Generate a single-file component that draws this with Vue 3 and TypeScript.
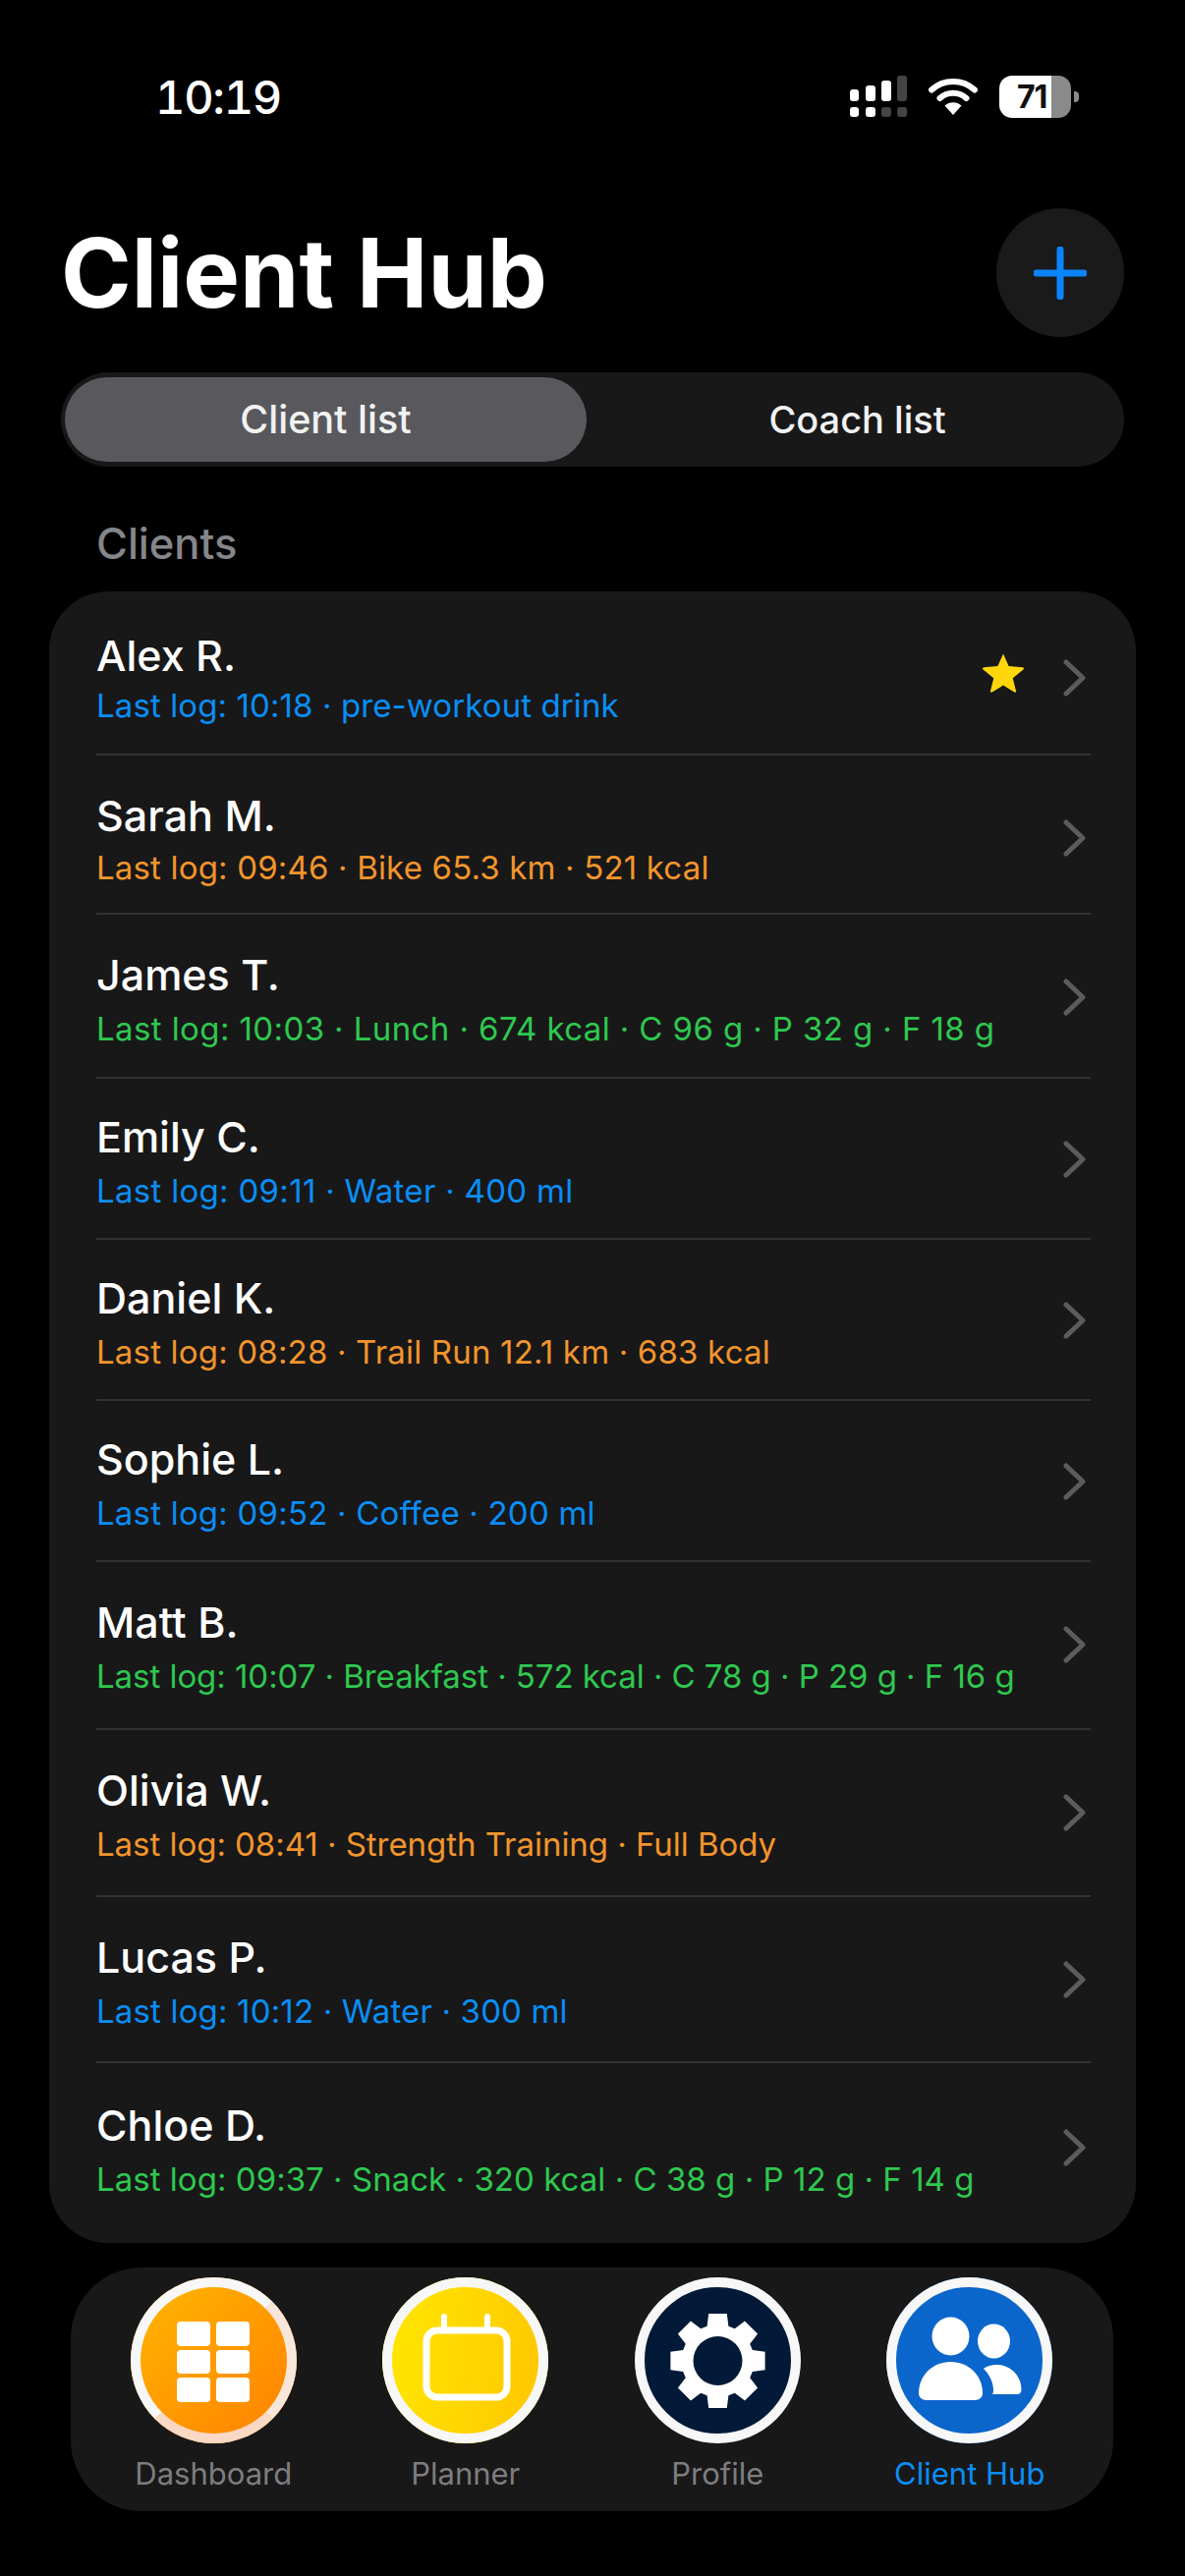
<template>
  <div class="screen">
    <header class="status">
      <span class="status__time">10:19</span>
      <div class="status__icons">
        <svg class="signal" width="58" height="42" viewBox="0 0 58 42">
          <rect x="0" y="14" width="9" height="12" rx="3" fill="#fff" />
          <rect x="16" y="10" width="10" height="16" rx="3" fill="#fff" />
          <rect x="32" y="5" width="10" height="21" rx="3" fill="#fff" />
          <rect x="48" y="0" width="10" height="26" rx="3" fill="#444" />
          <rect x="0" y="32" width="9" height="10" rx="3" fill="#fff" />
          <rect x="16" y="32" width="10" height="10" rx="3" fill="#fff" />
          <rect x="32" y="32" width="10" height="10" rx="3" fill="#444" />
          <rect x="48" y="32" width="10" height="10" rx="3" fill="#444" />
        </svg>
        <svg class="wifi" width="50" height="40" viewBox="0 0 50 40" fill="none">
          <path d="M3 13.5C15 2 35 2 47 13.5" stroke="#fff" stroke-width="6" stroke-linecap="round" />
          <path d="M11.5 22C19 15 31 15 38.5 22" stroke="#fff" stroke-width="6" stroke-linecap="round" />
          <path d="M16.5 29.5C21 25 29 25 33.5 29.5L25 39Z" fill="#fff" />
        </svg>
        <div class="battery">
          <div class="battery__body">
            <span class="battery__level">71</span>
          </div>
          <span class="battery__nub" />
        </div>
      </div>
    </header>

    <div class="title-row">
      <h1 class="title">Client Hub</h1>
      <button class="add-btn">
        <svg width="54" height="54" viewBox="0 0 54 54" fill="none">
          <path d="M27 3V51M3 27H51" stroke="#0a84ff" stroke-width="7" stroke-linecap="round" />
        </svg>
      </button>
    </div>

    <div class="segment">
      <div class="segment__item segment__item--active">Client list</div>
      <div class="segment__item segment__item--coach">Coach list</div>
    </div>

    <div class="section-label">Clients</div>

    <section class="card">
      <div
        v-for="(client, i) in clients"
        :key="client.name"
        class="row"
        :class="{ 'row--last': i === clients.length - 1 }"
        :style="{ height: client.h + 'px', paddingTop: client.top + 'px' }"
      >
        <div class="row__text">
          <div class="row__name">{{ client.name }}</div>
          <div
            class="row__log"
            :class="'row__log--' + client.tone"
            :style="{ marginTop: client.gap + 'px', letterSpacing: client.track + 'px' }"
          >
            {{ client.log }}
          </div>
        </div>
        <svg v-if="client.starred" class="row__star" width="44" height="42" viewBox="0 0 44 42">
          <path
            d="M22 1.5L27.6 14.6L41.8 15.8C43 15.9 43.4 17.3 42.5 18.1L31.7 27.3L35 41C35.3 42 34.2 42.7 33.3 42.2L22 35L10.7 42.2C9.8 42.7 8.7 42 9 41L12.3 27.3L1.5 18.1C0.6 17.3 1 15.9 2.2 15.8L16.4 14.6Z"
            fill="#ffd60a"
            transform="scale(1 0.96)"
          />
        </svg>
        <svg class="row__chevron" width="26" height="38" viewBox="0 0 26 38" fill="none">
          <path d="M4 3L21 19L4 35" stroke="#5c5c5e" stroke-width="5" stroke-linecap="round" stroke-linejoin="round" />
        </svg>
      </div>
    </section>

    <nav class="tabs">
      <div v-for="tab in tabs" :key="tab.label" class="tab" :class="{ 'tab--active': tab.active }">
        <div class="tab__icon" :class="'tab__icon--' + tab.key">
          <svg v-if="tab.key === 'dashboard'" viewBox="0 0 169 169" width="169" height="169" fill="#fff">
            <rect x="47" y="45" width="34" height="25" rx="4" />
            <rect x="87" y="45" width="34" height="25" rx="4" />
            <rect x="47" y="74" width="34" height="24" rx="4" />
            <rect x="87" y="74" width="34" height="24" rx="4" />
            <rect x="47" y="102" width="34" height="25" rx="4" />
            <rect x="87" y="102" width="34" height="25" rx="4" />
          </svg>
          <svg v-else-if="tab.key === 'planner'" viewBox="0 0 169 169" width="169" height="169" fill="none" stroke="#fff">
            <rect x="45" y="54" width="82" height="68" rx="11" stroke-width="7" />
            <path d="M63 40V52M107 40V52" stroke-width="6" stroke-linecap="round" />
          </svg>
          <svg v-else-if="tab.key === 'profile'" viewBox="0 0 169 169" width="169" height="169">
            <path :d="gearPath" fill="#fff" fill-rule="evenodd" />
          </svg>
          <svg v-else viewBox="0 0 169 169" width="169" height="169" fill="#fff">
            <ellipse cx="65.5" cy="60" rx="19" ry="19.5" />
            <ellipse cx="109.5" cy="65" rx="16.5" ry="17.5" />
            <path d="M108 119H133C136 119 137.5 117 137.5 114C137.5 100 126 89 112 89C107 89 103 90 99 93C105 99 109 107 109 115C109 116.5 108.7 118 108 119Z" />
            <path d="M41 125H90C95 125 98 122 98 118C98 100 84 86 65.5 86C47 86 33 100 33 118C33 122 36 125 41 125Z" />
          </svg>
        </div>
        <span class="tab__label">{{ tab.label }}</span>
      </div>
    </nav>
  </div>
</template>

<script setup lang="ts">
type Tone = 'blue' | 'orange' | 'green'

interface Client {
  name: string
  log: string
  tone: Tone
  h: number
  top: number
  gap: number
  track: number
  starred?: boolean
}

const clients: Client[] = [
  { name: 'Alex R.', log: 'Last log: 10:18 · pre-workout drink', tone: 'blue', h: 167, top: 38, gap: 0, track: 0.1, starred: true },
  { name: 'Sarah M.', log: 'Last log: 09:46 · Bike 65.3 km · 521 kcal', tone: 'orange', h: 162, top: 34, gap: 2, track: 0.17 },
  { name: 'James T.', log: 'Last log: 10:03 · Lunch · 674 kcal · C 96 g · P 32 g · F 18 g', tone: 'green', h: 167, top: 34, gap: 4, track: 0.4 },
  { name: 'Emily C.', log: 'Last log: 09:11 · Water · 400 ml', tone: 'blue', h: 164, top: 32, gap: 4, track: 0.3 },
  { name: 'Daniel K.', log: 'Last log: 08:28 · Trail Run 12.1 km · 683 kcal', tone: 'orange', h: 164, top: 32, gap: 4, track: 0.18 },
  { name: 'Sophie L.', log: 'Last log: 09:52 · Coffee · 200 ml', tone: 'blue', h: 164, top: 32, gap: 4, track: 0.2 },
  { name: 'Matt B.', log: 'Last log: 10:07 · Breakfast · 572 kcal · C 78 g · P 29 g · F 16 g', tone: 'green', h: 171, top: 34, gap: 4, track: -0.05 },
  { name: 'Olivia W.', log: 'Last log: 08:41 · Strength Training · Full Body', tone: 'orange', h: 170, top: 34, gap: 4, track: -0.04 },
  { name: 'Lucas P.', log: 'Last log: 10:12 · Water · 300 ml', tone: 'blue', h: 169, top: 34, gap: 4, track: 0.16 },
  { name: 'Chloe D.', log: 'Last log: 09:37 · Snack · 320 kcal · C 38 g · P 12 g · F 14 g', tone: 'green', h: 183, top: 36, gap: 4, track: 0.03 },
]

const tabs = [
  { key: 'dashboard', label: 'Dashboard' },
  { key: 'planner', label: 'Planner' },
  { key: 'profile', label: 'Profile' },
  { key: 'hub', label: 'Client Hub', active: true },
]

// 8-tooth cog with a round hole, centred on the 169 box
function buildGear(cx: number, cy: number): string {
  const tip = 49
  const root = 37
  const hole = 25
  const pts: string[] = []
  for (let t = 0; t < 8; t++) {
    const a = (t * Math.PI) / 4 - Math.PI / 2
    const at = (r: number, off: number) =>
      `${(cx + r * Math.cos(a + off)).toFixed(1)} ${(cy + r * Math.sin(a + off)).toFixed(1)}`
    pts.push(at(root, -0.3), at(tip, -0.19), at(tip, 0.19), at(root, 0.3))
  }
  const ring = `M${pts.join('L')}Z`
  const circle = `M${cx - hole} ${cy}a${hole} ${hole} 0 1 0 ${hole * 2} 0a${hole} ${hole} 0 1 0 ${-hole * 2} 0Z`
  return ring + circle
}

const gearPath = buildGear(84.5, 85)
</script>

<style>
html,
body {
  margin: 0;
  background: #000;
}
</style>

<style scoped>
.screen {
  width: 1206px;
  height: 2622px;
  background: #000;
  color: #fff;
  font-family: Inter, "Noto Sans", sans-serif;
  overflow: hidden;
  box-sizing: border-box;
}

/* status bar */
.status {
  display: flex;
  justify-content: space-between;
  align-items: center;
  height: 42px;
  padding: 77px 108px 0 158px;
}

.status__time {
  font-size: 47px;
  font-weight: 500;
  font-feature-settings: "tnum";
  letter-spacing: -1.3px;
}

.status__icons {
  display: flex;
  align-items: center;
  gap: 22px;
}

.battery {
  display: flex;
  align-items: center;
  gap: 3px;
}

.battery__body {
  width: 73px;
  height: 43px;
  border-radius: 13px;
  background: linear-gradient(90deg, #fff 73%, #8a8a8a 73%);
  display: flex;
  align-items: center;
  padding-left: 18px;
  box-sizing: border-box;
}

.battery__level {
  color: #111;
  font-size: 32px;
  font-weight: 700;
  letter-spacing: -1px;
}

.battery__nub {
  width: 5px;
  height: 11px;
  border-radius: 0 4px 4px 0;
  background: #8a8a8a;
}

/* title */
.title-row {
  display: flex;
  justify-content: space-between;
  align-items: center;
  padding: 93px 62px 0;
}

.title {
  margin: 0;
  font-size: 97px;
  line-height: 131px;
  font-weight: 700;
}

.add-btn {
  width: 130px;
  height: 131px;
  border: none;
  padding: 0;
  border-radius: 50%;
  background: #1a1a1b;
  display: flex;
  align-items: center;
  justify-content: center;
}

/* segmented control */
.segment {
  margin: 36px 62px 0;
  height: 96px;
  padding: 5px 4px;
  box-sizing: border-box;
  border-radius: 48px;
  background: #181819;
  display: grid;
  grid-template-columns: 531px 1fr;
}

.segment__item {
  display: flex;
  align-items: center;
  justify-content: center;
  font-size: 38px;
  font-weight: 500;
  color: #f2f2f2;
  border-radius: 43px;
}

.segment__item--active {
  background: #59595d;
  font-size: 39.5px;
}

.segment__item--coach {
  padding-left: 8px;
}

.section-label {
  margin: 54px 0 0 98px;
  height: 48px;
  line-height: 48px;
  font-size: 43.5px;
  font-weight: 500;
  color: #86868a;
}

/* client list */
.card {
  margin: 25px 50px 0;
  background: #181819;
  border-radius: 60px;
  padding: 0 46px 0 48px;
  overflow: hidden;
}

.row {
  display: flex;
  align-items: flex-start;
  box-sizing: border-box;
  border-bottom: 2px solid #323234;
}

.row--last {
  border-bottom: none;
}

.row__text {
  flex: 1;
  min-width: 0;
}

.row__name {
  font-size: 43px;
  line-height: 54px;
  font-weight: 500;
  color: #fff;
}

.row__log {
  font-size: 33px;
  line-height: 48px;
  white-space: nowrap;
}

.row__log--blue {
  color: #0a8ef5;
}

.row__log--orange {
  color: #f2952c;
}

.row__log--green {
  color: #2fc84f;
}

.row__star {
  margin: 24px 38px 0 0;
}

.row__chevron {
  margin-top: 31px;
  margin-right: 3px;
}

/* tab bar */
.tabs {
  margin: 25px 73px 0 72px;
  height: 248px;
  padding: 10px 18px 0 17px;
  box-sizing: border-box;
  border-radius: 72px;
  background: #181819;
  display: grid;
  grid-template-columns: repeat(4, 1fr);
}

.tab {
  display: flex;
  flex-direction: column;
  align-items: center;
  color: #7d7d7f;
}

.tab--active {
  color: #0a8ef5;
}

.tab__icon {
  width: 169px;
  height: 169px;
  border-radius: 50%;
  position: relative;
}

.tab__icon svg {
  display: block;
}

.tab__icon::after {
  content: "";
  position: absolute;
  inset: 0;
  border-radius: 50%;
  border: 10px solid #f7f7f7;
  box-sizing: border-box;
}

.tab__icon--dashboard::after {
  border-color: #f7f7f7 #f8e6da #f9d8c4 #f7f7f7;
}

.tab__icon--dashboard {
  background: linear-gradient(135deg, #ffb800, #ff7f00);
}

.tab__icon--planner {
  background: linear-gradient(100deg, #ffe900, #ffc400);
}

.tab__icon--profile {
  background: #021a38;
}

.tab__icon--hub {
  background: #0b66cc;
}

.tab__label {
  margin-top: 9px;
  font-size: 31px;
  line-height: 44px;
}
</style>
